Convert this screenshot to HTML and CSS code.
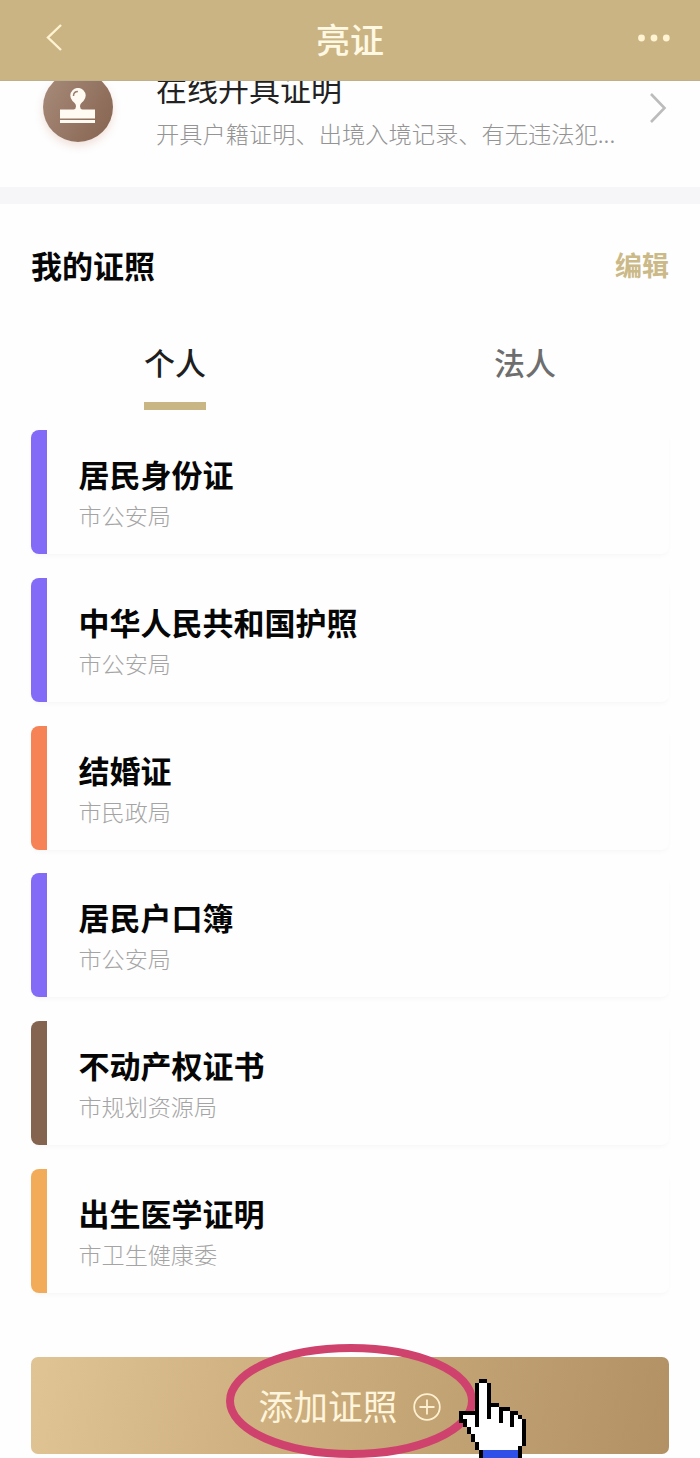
FILE: index.html
```
<!DOCTYPE html>
<html lang="zh-CN">
<head>
    <meta charset="UTF-8">
    <meta name="viewport" content="width=device-width, initial-scale=1.0">
    <title>亮证</title>
    <link rel="stylesheet" href="styles.css">
</head>
<body>
    <header class="navbar">
        <svg class="back" viewBox="0 0 18 30"><path d="M16 2 L3 14.5 L16 27"/></svg>
        <h1>亮证</h1>
        <svg class="more" viewBox="0 0 32 8">
            <circle cx="3.5" cy="4" r="3.4"/>
            <circle cx="16" cy="4" r="3.4"/>
            <circle cx="28.3" cy="4" r="3.4"/>
        </svg>
    </header>

    <section class="service">
        <div class="service-icon">
            <svg viewBox="0 0 36 37">
                <path d="M0 21.500H13.500Q16 21 16 18.500C16 16 14.500 15 12.500 13A7.700 7.700 0 1 1 23.500 13C21.500 15 20 16 20 18.500Q20 21 22.500 21.500H35V30.500H0z"/>
                <path d="M0 32h35v3H0z"/>
                <path class="shine" d="M13.500 8c0-2.800 1.600-4.400 4.400-4.400"/>
            </svg>
        </div>
        <div class="service-text">
            <h2>在线开具证明</h2>
            <p>开具户籍证明、出境入境记录、有无违法犯...</p>
        </div>
        <svg class="arrow" viewBox="0 0 18 32"><path d="M2 2 L15.500 16 L2 30"/></svg>
    </section>

    <main class="licenses">
        <div class="section-head">
            <h2>我的证照</h2>
            <a class="edit">编辑</a>
        </div>

        <div class="tabs">
            <div class="tab active">个人</div>
            <div class="tab">法人</div>
        </div>

        <div class="card-list">
            <div class="card purple">
                <h3>居民身份证</h3>
                <p>市公安局</p>
            </div>
            <div class="card purple">
                <h3>中华人民共和国护照</h3>
                <p>市公安局</p>
            </div>
            <div class="card coral">
                <h3>结婚证</h3>
                <p>市民政局</p>
            </div>
            <div class="card purple">
                <h3>居民户口簿</h3>
                <p>市公安局</p>
            </div>
            <div class="card brown">
                <h3>不动产权证书</h3>
                <p>市规划资源局</p>
            </div>
            <div class="card orange">
                <h3>出生医学证明</h3>
                <p>市卫生健康委</p>
            </div>
        </div>

        <div class="add-btn">
            <span>添加证照</span>
            <svg class="plus" viewBox="0 0 28 28">
                <circle cx="14" cy="14" r="12.800"/>
                <path d="M14 6.500v15M6.500 14h15"/>
            </svg>

            <!-- highlight ring and pointer lie over the button -->
            <svg class="ring" viewBox="0 0 250 114"><ellipse cx="125" cy="57" rx="121" ry="53"/></svg>
            <svg class="hand" viewBox="0 0 17 20">
                <path fill="#fff" d="M5 1h2v6h3v1h3v1h2v1h1v7h-1v1H5v-2H4v-2H3v-2H2v-1H1V9h3V1z"/>
                <path fill="#2f50e8" d="M6 18h9v2H6z"/>
                <path fill="#000" d="M5 0h2v1H5zM4 1h1v11H4zM7 1h1v9H7zM8 6h2v1H8zM10 7h3v1h-3zM10 8h1v3h-1zM13 8h2v1h-2zM13 9h1v3h-1zM15 9h1v1h-1zM16 10h1v7h-1zM15 17h1v3h-1zM0 8h4v1H0zM0 9h1v2H0zM1 10h1v2H1zM2 12h1v2H2zM3 14h1v2H3zM4 16h1v2H4zM5 18h1v2H5z"/>
            </svg>
        </div>
    </main>
</body>
</html>
```
FILE: styles.css
```
* {
    box-sizing: border-box;
    margin: 0;
    padding: 0;
}
body {
    width: 700px;
    height: 1458px;
    overflow: hidden;
    background: #fefefe;
    font-family: "Noto Sans CJK SC", sans-serif;
}
svg {
    display: block;
    fill: none;
}

.navbar {
    display: flex;
    align-items: center;
    justify-content: space-between;
    height: 81px;
    padding: 0 30px 4px 45px;
    background: #cab483;
    border-bottom: 1px solid #bfb08c;
}
.navbar h1 {
    font-size: 34px;
    font-weight: 500;
    line-height: 40px;
    color: #fff8e2;
    padding-top: 1px;
    margin-left: -1px;
}
.back {
    width: 18px;
    height: 30px;
    stroke: #fff3d2;
    stroke-width: 2.4;
}
.more {
    width: 32px;
    height: 8px;
    fill: #fff3d2;
}

/* this row is scrolled partly under the navbar */
.service {
    display: flex;
    height: 123px;
    padding-left: 43px;
    padding-right: 33px;
    overflow: hidden;
    background: #fefefe;
    border-bottom: 17px solid #f6f6f9;
}
.service-icon {
    width: 70px;
    height: 70px;
    margin-top: -9px;
    padding: 16px 0 0 17px;
    border-radius: 50%;
    background: linear-gradient(120deg, #a98c7c, #85634f);
    box-shadow: 0 4px 8px rgba(190, 120, 90, 0.22);
}
.service-icon svg {
    width: 36px;
    height: 37px;
    fill: #fffaf2;
}
.service-icon .shine {
    fill: none;
    stroke: #9b7e6e;
    stroke-width: 1.5;
}
.service-text {
    flex: 1;
    margin-left: 43px;
}
.service-text h2 {
    margin-top: -13px;
    font-size: 31px;
    font-weight: 400;
    line-height: 40px;
    color: #222;
    white-space: nowrap;
}
.service-text p {
    margin-top: 9px;
    font-size: 23.25px;
    font-weight: 300;
    line-height: 32px;
    color: #949494;
    white-space: nowrap;
}
.arrow {
    width: 18px;
    height: 32px;
    margin-top: 11px;
    stroke: #bcbcbc;
    stroke-width: 2.6;
}

.licenses {
    padding: 0 31px;
}
.section-head {
    display: flex;
    align-items: center;
    justify-content: space-between;
    height: 124px;
    padding-bottom: 4px;
}
.section-head h2 {
    font-size: 31px;
    font-weight: 700;
    color: #060606;
}
.edit {
    font-size: 27px;
    font-weight: 700;
    color: #cbb988;
}

.tabs {
    display: flex;
    margin: 0 -31px;
}
.tab {
    display: flex;
    flex: 1;
    flex-direction: column;
    align-items: center;
    height: 102px;
    padding-top: 14px;
    font-size: 31px;
    font-weight: 500;
    line-height: 40px;
    color: #6e6e6e;
}
.tab.active {
    color: #1e1e1e;
}
.tab.active::after {
    content: "";
    width: 62px;
    height: 8px;
    margin-top: 20px;
    background: #c8b684;
}

.card-list {
    display: flex;
    flex-direction: column;
    gap: 23.8px;
}
.card {
    height: 124px;
    padding: 22px 0 0 31.500px;
    border-left: 16px solid #836bf8;
    border-radius: 8px;
    background: #fefefe;
    box-shadow: 0 3px 5px -2px rgba(90, 80, 120, 0.06);
}
.card h3 {
    font-size: 31px;
    font-weight: 700;
    line-height: 44px;
    color: #060606;
}
.card p {
    margin-top: 3px;
    font-size: 23.1px;
    font-weight: 300;
    line-height: 32px;
    color: #a4a4a4;
}
.card.coral {
    border-left-color: #f68356;
}
.card.brown {
    border-left-color: #84644f;
}
.card.orange {
    border-left-color: #f2ac59;
}

.add-btn {
    position: relative;
    display: flex;
    align-items: center;
    justify-content: center;
    gap: 16px;
    height: 97px;
    margin-top: 64px;
    padding-top: 3px;
    border-radius: 7px;
    background: linear-gradient(100deg, #e0c494, #cbac7c 45%, #b29265);
    font-size: 34.7px;
    color: #fff5dc;
}
.add-btn span {
    padding-bottom: 3px;
}
.plus {
    width: 28px;
    height: 28px;
    stroke: #fff0d0;
    stroke-width: 1.8;
}
.ring {
    position: absolute;
    left: 195px;
    top: -13px;
    width: 250px;
    height: 114px;
    stroke: #d0426e;
    stroke-width: 8;
}
.hand {
    position: absolute;
    left: 428.3px;
    top: 21.7px;
    width: 67.3px;
    height: 79.2px;
    shape-rendering: crispEdges;
}
```
